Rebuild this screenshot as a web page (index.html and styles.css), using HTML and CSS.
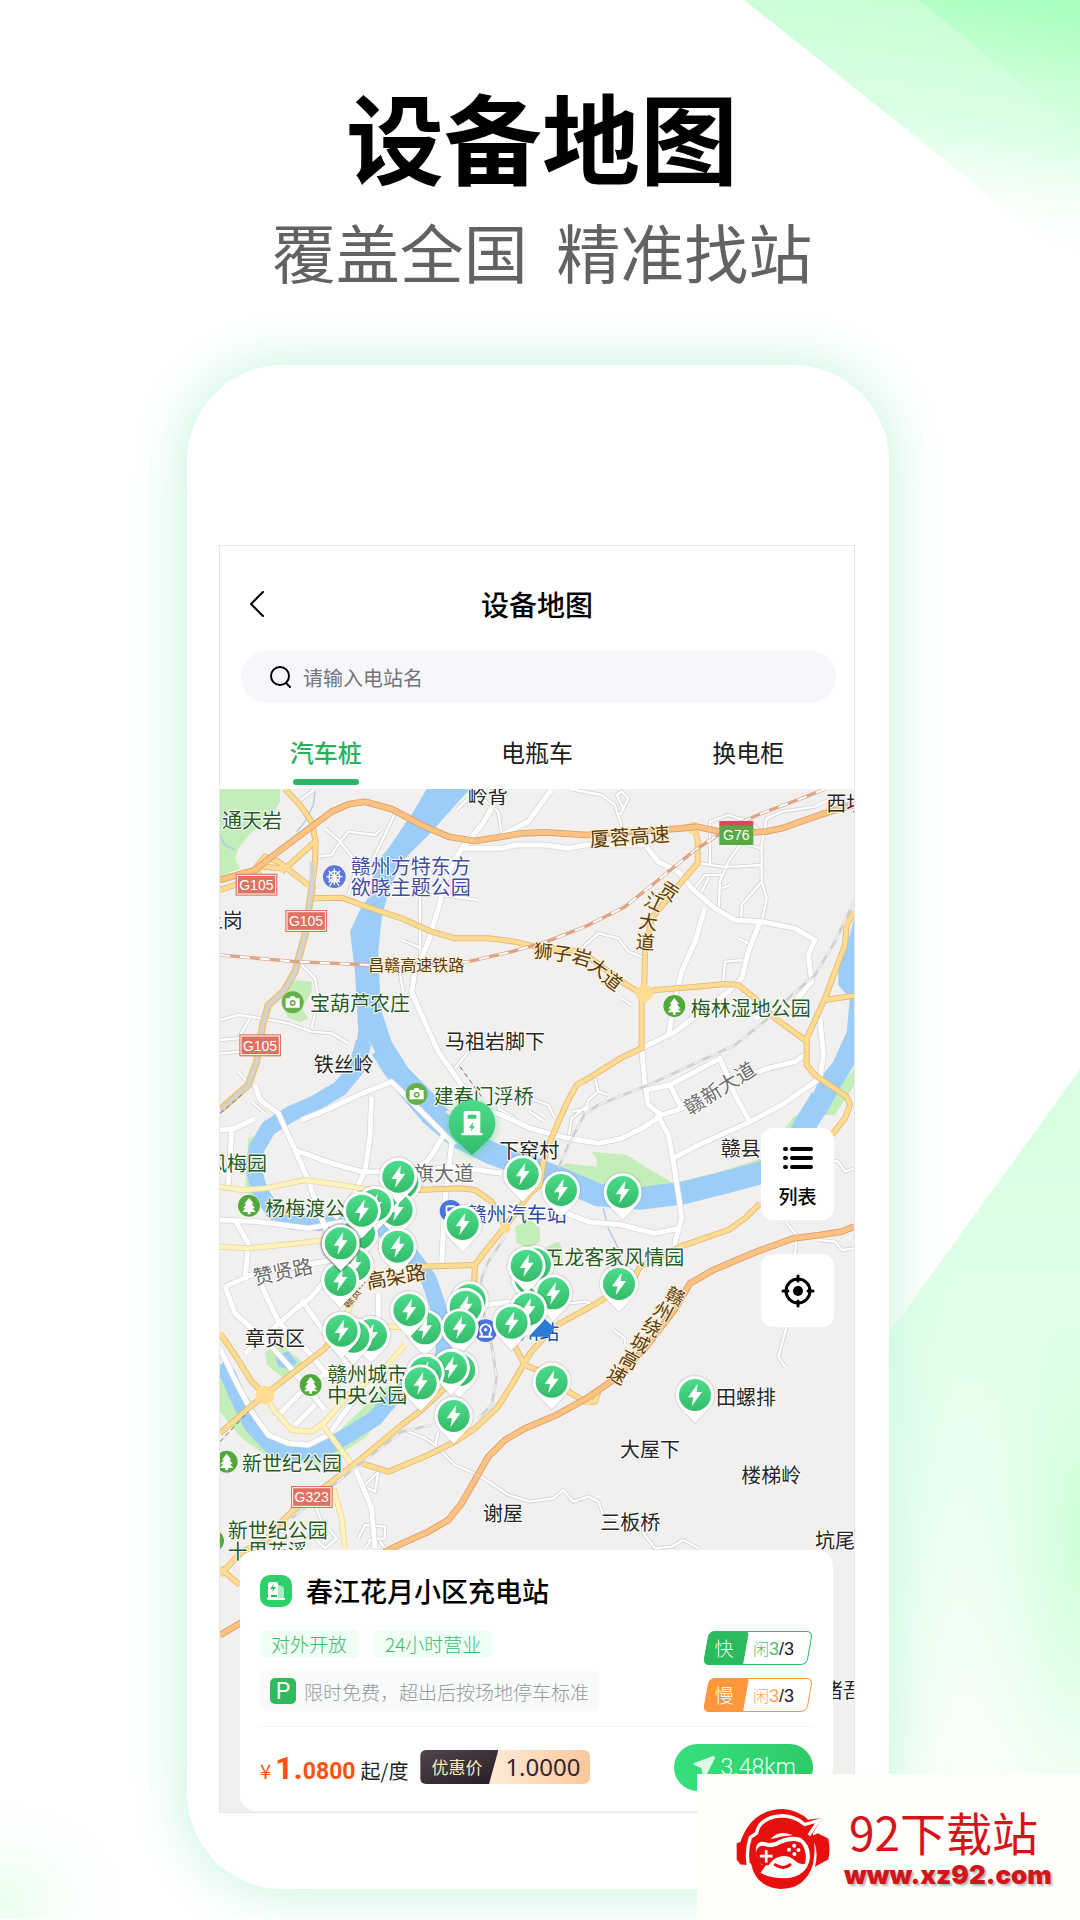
FILE: index.html
```html
<!DOCTYPE html>
<html lang="zh-CN">
<head>
    <meta charset="UTF-8">
    <meta name="viewport" content="width=device-width, initial-scale=1.0">
    <title>设备地图</title>
    <link rel="stylesheet" href="styles.css">
</head>
<body>
    <svg class="backdrop" viewBox="0 0 1080 1920" preserveAspectRatio="none" aria-hidden="true">
        <defs>
            <linearGradient id="rayTop" x1="0.7" y1="0" x2="0.5" y2="1">
                <stop offset="0" stop-color="#c4ffd2"/>
                <stop offset="0.5" stop-color="#dcffe5"/>
                <stop offset="1" stop-color="#ffffff" stop-opacity="0"/>
            </linearGradient>
            <linearGradient id="rayTopDark" x1="0.8" y1="0" x2="0.6" y2="1">
                <stop offset="0" stop-color="#a6ffbc"/>
                <stop offset="1" stop-color="#d6ffe0" stop-opacity="0"/>
            </linearGradient>
            <linearGradient id="raySide" x1="0" y1="0" x2="0" y2="1">
                <stop offset="0" stop-color="#d6ffdf"/>
                <stop offset="0.5" stop-color="#e6ffec"/>
                <stop offset="1" stop-color="#f8fff9"/>
            </linearGradient>
            <radialGradient id="raySideDark" cx="1" cy="0.45" r="0.8">
                <stop offset="0" stop-color="#ccffd6"/>
                <stop offset="1" stop-color="#e6ffec" stop-opacity="0"/>
            </radialGradient>
            <radialGradient id="glowCorner">
                <stop offset="0" stop-color="#e8ffee"/>
                <stop offset="1" stop-color="#ffffff" stop-opacity="0"/>
            </radialGradient>
        </defs>
        <path fill="url(#rayTop)" d="M744 0H1080V250L1040 236Z"/>
        <path fill="url(#rayTopDark)" d="M919 0H1080V150L1040 100Z"/>
        <path fill="url(#raySide)" d="M1080 1070L888 1335V1775H1080Z"/>
        <rect fill="url(#raySideDark)" x="940" y="1330" width="140" height="445"/>
        <ellipse fill="url(#glowCorner)" cx="0" cy="1900" rx="150" ry="120"/>
    </svg>

    <header class="hero">
        <h1>设备地图</h1>
        <p>覆盖全国&nbsp;&nbsp;精准找站</p>
    </header>

    <main class="phone">
        <div class="screen">
            <div class="app-bar">
                <button class="back" type="button" aria-label="返回">
                    <svg viewBox="0 0 18 28"><path d="M15 2L3 14L15 26"/></svg>
                </button>
                <h2>设备地图</h2>
            </div>

            <label class="search">
                <svg viewBox="0 0 24 24"><circle cx="11" cy="11" r="9"/><path d="M17 18L21 22"/></svg>
                <input type="text" placeholder="请输入电站名" aria-label="请输入电站名">
            </label>

            <nav class="tabs">
                <button class="tab active" type="button">汽车桩</button>
                <button class="tab" type="button">电瓶车</button>
                <button class="tab" type="button">换电柜</button>
            </nav>

            <div class="map">
                <svg class="map-canvas" viewBox="15 12 1902 3069" preserveAspectRatio="xMinYMin slice">
                    <defs>
                        <linearGradient id="pinFill" x1="0" y1="0" x2="0" y2="1">
                            <stop offset="0" stop-color="#4bdc8c"/>
                            <stop offset="1" stop-color="#35bb69"/>
                        </linearGradient>
                        <g id="pin">
                            <path class="pin-shadow" d="M-46 40A61 61 0 1 1 46 40L0 88Z"/>
                            <path fill="#fff" d="M-43 38A57 57 0 1 1 43 38L0 83Z"/>
                            <circle r="48" fill="url(#pinFill)"/>
                            <path fill="#fff" d="M8 -34L-21 7H-5L-10 34L21 -9H5Z"/>
                        </g>
                        <g id="tree">
                            <circle r="34" fill="#fff"/>
                            <circle r="33" fill="#52a83b"/>
                            <path fill="#fff" d="M0 -24L14 -6H8L18 8H10L20 19H4V26H-4V19H-20L-10 8H-18L-8 -6H-14Z"/>
                        </g>
                        <g id="camera">
                            <circle r="33" fill="#66b04c"/>
                            <path fill="#fff" d="M-21 -12H-9L-6 -18H6L9 -12H21V16H-21Z"/>
                            <circle cy="2" r="9" fill="#66b04c"/>
                            <circle cy="2" r="4" fill="#fff"/>
                        </g>
                        <g id="whiteRoads">
                            <path d="M990 180L900 180L860 190H740L700 260L670 370L640 470L600 560L590 620L620 690L670 800L740 900L800 960"/>
                            <path d="M990 180L1060 190L1110 180H1290L1330 230L1390 260L1430 310L1500 370L1560 405L1640 410L1740 430L1800 465L1780 510L1790 590L1740 650L1620 700"/>
                            <path d="M740 190L800 120L830 70L855 12M860 150L940 110L990 40L1010 12"/>
                            <path d="M1635 410L1600 500L1580 580L1540 620L1380 740L1280 790L1290 900L1300 960L1340 990"/>
                            <path d="M1470 370L1440 470L1400 560L1385 620L1360 750"/>
                            <path d="M1295 915L1365 900L1515 820L1560 930L1605 1010M1365 900L1400 970M1770 810L1740 830L1660 850L1600 870"/>
                            <path d="M1815 700L1825 810L1815 880L1700 960L1605 1010L1450 1080L1375 1120"/>
                            <path d="M1325 985L1360 1050L1375 1130L1395 1260L1400 1300L1380 1370V1390"/>
                            <path d="M800 970L860 990L945 1030L1060 1060L1150 1075L1220 1060L1290 1025L1340 990L1400 970L1450 940"/>
                            <path d="M1055 1285L1120 1310L1220 1320L1320 1345L1390 1330"/>
                            <path d="M260 1005L345 970L430 930L530 890L620 980L690 1050L720 1080"/>
                            <path d="M120 900L135 945L190 985L240 1095L280 1185L310 1275L350 1375"/>
                            <path d="M240 1095L350 1135L440 1160H590L720 1145L860 1165"/>
                            <path d="M470 935L465 1055L450 1155L420 1225L360 1300"/>
                            <path d="M15 1305L130 1310L280 1330L390 1310M60 1305L100 1375L90 1485M15 1035L60 1030L120 1000M50 1035L40 1200"/>
                            <path d="M30 1505L120 1465L300 1435L400 1415M30 1505L60 1585L170 1685L250 1775L330 1875"/>
                            <path d="M130 1480L190 1610L280 1700L340 1775M90 1705L250 1565L290 1535L380 1425M260 1545L330 1645L400 1745"/>
                            <path d="M490 1525V1625M710 1075L690 1245L680 1435M690 1045L640 1125L590 1160M800 1560L900 1550"/>
                            <path d="M15 1690L60 1785L110 1880L160 1950L220 1975L280 1980L340 1950L420 1840L480 1790L560 1700"/>
                            <path d="M180 1900L280 1800L340 1760M240 1920L300 1860"/>
                            <path d="M420 2050L470 2170L480 2290"/>
                        </g>
                        <g id="lanes">
                            <path d="M330 130L375 170L415 220L420 260L400 330M310 215L350 210L375 170L400 140L480 150L500 130M540 85L500 170L470 230"/>
                            <path d="M680 330L790 345M615 330V520M560 465L620 490M550 540L565 620M250 50L300 12M725 75L760 40M800 40L850 80L860 150"/>
                            <path d="M15 705L70 690L140 700L220 715L290 740L350 745L400 775M260 540L300 580L310 640L290 730M15 765L70 760L105 700M15 805L80 800M110 950L150 985M70 860L105 900"/>
                            <path d="M720 850L760 800L790 790M860 900L850 970L900 1000"/>
                            <path d="M1065 12L1160 30L1200 60L1215 110L1230 150M1215 90L1240 40L1220 20L1205 30L1225 70"/>
                            <path d="M1485 240V110L1540 90L1600 110L1640 140M1455 235L1520 245L1560 245L1640 240V290L1580 360L1578 405M1640 240V180L1655 100L1700 80L1800 65L1850 40L1917 50"/>
                            <path d="M1590 160L1540 230L1515 290L1510 390M1640 290L1655 340L1640 410M1560 170L1640 190M1430 320L1470 270H1520M1455 330L1480 280M1520 310L1545 300"/>
                            <path d="M1100 490L1150 445L1210 460L1240 500L1290 520M1525 590L1530 530L1590 525M1570 460L1600 475M1220 640L1250 660"/>
                            <path d="M1120 960L1070 1000L1060 1060M1140 880L1150 920L1120 945L1110 985M1150 920L1180 930M1070 980L1120 970"/>
                            <path d="M945 940L1000 960L1020 1000M945 980L990 1010"/>
                            <path d="M1715 1315L1745 1350L1740 1410M1805 1365L1860 1370L1880 1395L1917 1390M1840 1125L1870 1130L1890 1160L1917 1150"/>
                            <path d="M1715 1625L1690 1715L1710 1745M1195 1635L1230 1660V1680M1065 1555L1110 1550L1140 1560"/>
                            <path d="M570 1935L630 1960L660 1980L720 2040L790 2070L880 2130L945 2150L1015 2140L1045 2115L1075 2150L1120 2135L1150 2150L1165 2190L1285 2220V2245L1320 2290L1370 2285L1405 2265L1450 2290"/>
                            <path d="M660 1980L670 1940M450 2100L490 2060M460 2110L480 2120L490 2060M300 2160L320 2210L300 2260L330 2290L365 2260L340 2230M430 2260L450 2220L510 2225V2260L460 2265M450 2290L480 2250L510 2290"/>
                        </g>
                        <g id="yellowRoads">
                            <path d="M210 12L255 60L290 110L302 170L300 230L290 310"/>
                            <path d="M120 250L150 215L190 230L280 300M200 260L300 170M15 315L60 300L140 262M140 245L200 250"/>
                            <path d="M290 340L380 338L440 360L560 400L650 440L720 460H820L900 470L960 485L1100 500L1220 590L1285 630L1320 615L1445 605L1530 597L1570 600L1620 640L1680 700L1770 765"/>
                            <path d="M1917 380L1895 420L1890 480L1830 640L1775 760V840L1800 870L1895 935L1905 960L1890 1000L1850 1050M1830 645L1917 632"/>
                            <path d="M1410 130L1435 120L1448 165V235L1400 290L1310 400L1290 500L1288 600L1280 640V790L1225 815L1120 880L1085 900L1060 945L1035 1000L1005 1070L985 1130L975 1200L945 1225L870 1325L810 1400L780 1440L620 1445"/>
                            <path d="M870 1325L830 1250L780 1215L740 1210L600 1215"/>
                            <path d="M780 1435L775 1560L740 1680L700 1800L620 1875L560 1920L440 2020L350 2090L230 2180L190 2220L150 2270L80 2300L15 2370M15 2350L75 2400"/>
                            <path d="M1635 1255L1590 1300L1540 1335L1395 1385L1275 1445L1255 1485L1145 1555L1035 1615L985 1660L945 1705L890 1800L845 1870L780 1930L720 1970L640 2010L520 2060L440 2035"/>
                            <path d="M15 1645L60 1710L110 1790L150 1830L200 1790L330 1690L400 1610M150 1830L100 1870L15 1945"/>
                            <path d="M900 1685L930 1740L990 1765L1060 1820L1110 1850L1140 1850L1150 1820"/>
                        </g>
                        <g id="paleRoads">
                            <path d="M600 1215L500 1220L380 1200L270 1185L150 1210L80 1215L15 1205"/>
                            <path d="M15 1385L100 1390L250 1375L330 1365M380 1625L540 1625L740 1640M420 1525L380 1625"/>
                            <path d="M150 1830L180 1880L230 1935L290 1940L330 1910L400 1830L500 1760L570 1680M320 1915L360 1970L420 2050M355 2110L380 2200L390 2290"/>
                        </g>
                        <g id="highways">
                            <path d="M15 285L120 255L190 200L290 125L350 80L400 58L450 50L530 72L620 120L700 155L780 168L860 155L920 145L990 142L1115 150L1400 130L1445 125L1540 145L1650 140L1700 130L1800 95L1860 75L1917 60"/>
                            <path d="M1917 1325L1880 1340L1815 1350L1735 1360L1625 1400L1495 1455L1425 1495L1385 1565L1290 1690L1195 1785L1115 1840L1025 1890L930 1930L870 1965L820 2015L780 2085L740 2155L700 2205L640 2240L530 2290L400 2360L75 2515L15 2550"/>
                        </g>
                    </defs>

                    <rect class="land" x="15" y="12" width="1902" height="3069"/>

                    <g class="park">
                        <path d="M15 12H195V50L165 100L110 140L70 190L60 220L75 250L15 275Z"/>
                        <path d="M235 585L290 590V620L260 670L280 700L255 712L220 700L205 670L200 640Z"/>
                        <path d="M1130 1100L1235 1110L1315 1160L1375 1195L1305 1207H1205L1095 1185L1035 1145L1055 1135L1145 1145V1120Z"/>
                        <path d="M1375 1195L1500 1165L1640 1120L1740 990L1760 1000L1680 1150L1400 1215ZM1917 850L1875 905L1830 990H1860L1917 900Z"/>
                        <path d="M900 1325L945 1305L975 1330V1370L940 1390L905 1375ZM1005 1380L1030 1370L1040 1385V1430L970 1440L980 1400Z"/>
                        <path d="M150 1700L200 1680L260 1730L250 1765L200 1775L155 1740Z"/>
                        <path d="M15 1780L50 1770L110 1850L150 1940L220 1990L330 1980L400 1910L520 1800L560 1820L450 1960L320 2040L180 2030L80 1960L15 1880Z"/>
                        <path d="M100 1060L130 1050L120 1240L90 1220ZM130 1250L220 1290L180 1320Z"/>
                    </g>
                    <g class="river">
                        <path d="M635 12L595 80L520 190L478 240L465 330L432 380L405 440L420 560L430 740L420 800L465 770L530 900L640 1010L700 975L640 910L580 850L530 770L500 680L495 620L490 500L500 400L520 320L560 230L650 140L730 50L765 12Z"/>
                        <path d="M1765 990L1815 880L1855 830L1895 740L1905 640L1870 600V520L1905 450L1917 400V840L1875 910L1830 990Z"/>
                        <path d="M180 1710L220 1700L245 1730L230 1755L190 1745Z"/>
                        <path class="stream" d="M446 770L425 850L375 910L300 955L230 985L160 1030L125 1090L115 1150L135 1220L175 1280L230 1310L320 1315L420 1300L500 1330L580 1400L640 1480L668 1560L690 1660L680 1740L600 1790L530 1840L480 1900L400 1950L320 1995L230 2005L170 1985L110 1920L70 1840L40 1770L15 1740"/>
                        <path class="stream wide" d="M500 790L530 840L590 920L650 990L720 1050L830 1105L900 1130L945 1145L1045 1185L1150 1230L1280 1240L1400 1225L1520 1195L1650 1160L1720 1115L1770 1020L1820 940"/>
                        <path class="creek" d="M300 20L295 60L270 110L245 140M15 150L30 180L60 195M1165 1270L1180 1330L1210 1390"/>
                    </g>

                    <g class="lane-edge"><use href="#lanes"/></g>
                    <g class="lane-fill"><use href="#lanes"/></g>
                    <g class="white-edge"><use href="#whiteRoads"/></g>
                    <g class="white-fill"><use href="#whiteRoads"/></g>
                    <g class="pale-edge"><use href="#paleRoads"/></g>
                    <g class="pale-fill"><use href="#paleRoads"/></g>
                    <g class="yellow-edge"><use href="#yellowRoads"/></g>
                    <g class="yellow-fill"><use href="#yellowRoads"/></g>
                    <path class="old-road-edge" d="M292 300L270 450L240 560L205 620L160 660L143 720L125 830L100 900L15 975"/>
                    <path class="old-road" d="M292 230L290 310L270 450L240 560L205 620L160 660L143 720L125 830L100 900L15 975"/>
                    <g class="junction"><circle cx="1288" cy="625" r="26"/><circle cx="150" cy="1830" r="28"/><circle cx="1432" cy="130" r="18"/><circle cx="1115" cy="1845" r="16"/><circle cx="870" cy="1330" r="16"/></g>
                    <g class="highway-edge"><use href="#highways"/></g>
                    <g class="highway-fill"><use href="#highways"/></g>

                    <path class="rail" d="M15 510L240 530L470 540L760 530L890 500L995 470L1110 425L1230 365L1330 285L1440 195L1540 130L1640 85L1760 40L1830 12"/>
                    <path class="rail-dash" d="M15 510L240 530L470 540L760 530L890 500L995 470L1110 425L1230 365L1330 285L1440 195L1540 130L1640 85L1760 40L1830 12"/>
                    <g class="grey-rail">
                        <path d="M1917 350L1860 470L1800 570L1730 630L1660 700L1560 780L1450 830L1300 900L1150 960L1110 985L1060 1080L1030 1150"/>
                        <path d="M870 1355L820 1430L800 1480V1560L830 1680L845 1780L830 1860L790 1900M650 1920L560 1940L470 2010L380 2080L230 2200"/>
                    </g>
                    <g class="grey-rail-dash">
                        <path d="M1917 350L1860 470L1800 570L1730 630L1660 700L1560 780L1450 830L1300 900L1150 960L1110 985L1060 1080L1030 1150"/>
                        <path d="M870 1355L820 1430L800 1480V1560L830 1680L845 1780L830 1860L790 1900M650 1920L560 1940L470 2010L380 2080L230 2200"/>
                    </g>
                    <path class="thin-rail" d="M735 845L800 935M15 1970L100 1880M15 985L80 930"/>

                    <!-- road number plates -->
                    <g class="plate">
                        <rect x="62" y="266" width="125" height="66"/><rect class="plate-line" x="67" y="271" width="115" height="56"/><text x="124" y="314">G105</text>
                        <rect x="211" y="375" width="125" height="66"/><rect class="plate-line" x="216" y="380" width="115" height="56"/><text x="273" y="424">G105</text>
                        <rect x="73" y="748" width="125" height="66"/><rect class="plate-line" x="78" y="753" width="115" height="56"/><text x="135" y="798">G105</text>
                        <rect x="228" y="2103" width="125" height="66"/><rect class="plate-line" x="233" y="2108" width="115" height="56"/><text x="290" y="2152">G323</text>
                        <rect class="plate-red" x="1513" y="108" width="102" height="16"/><rect class="plate-green" x="1513" y="122" width="102" height="58"/><text x="1564" y="165">G76</text>
                    </g>

                    <!-- points of interest -->
                    <g transform="translate(358 275)">
                        <circle r="34" fill="#5c78dc"/>
                        <g fill="none" stroke="#fff" stroke-width="4"><circle r="16"/><path d="M0 -24V24M-24 0H24M-17 -17L17 17M-17 17L17 -17M-14 28L0 4L14 28"/></g>
                        <circle r="5" fill="#fff"/>
                    </g>
                    <use href="#camera" x="233" y="652"/>
                    <use href="#camera" x="605" y="927"/>
                    <use href="#tree" x="1378" y="663"/>
                    <use href="#tree" x="102" y="1262"/>
                    <use href="#tree" x="287" y="1800"/>
                    <use href="#tree" x="35" y="2030"/>
                    <use href="#tree" x="-6" y="2267"/>
                    <g transform="translate(707 1278)"><circle r="33" fill="#4a74dd"/><rect x="-15" y="-17" width="30" height="30" rx="5" fill="#fff"/><rect x="-10" y="-11" width="20" height="11" fill="#4a74dd"/></g>
                    <g transform="translate(812 1637)"><circle r="34" fill="#4a74dd"/><path d="M-12 18V8A16 16 0 1 1 12 8V18M-20 18H20" fill="none" stroke="#fff" stroke-width="6"/><circle cy="-3" r="5" fill="#fff"/></g>

                    <g class="place">
                        <text x="758" y="58">岭背</text>
                        <text x="1834" y="78">西坝</text>
                        <text x="-37" y="429">上岗</text>
                        <text x="296" y="862">铁丝岭</text>
                        <text x="690" y="792">马祖岩脚下</text>
                        <text x="853" y="1120">下窑村</text>
                        <text x="1517" y="1114">赣县</text>
                        <text x="90" y="1682">章贡区</text>
                        <text x="1503" y="1860">田螺排</text>
                        <text x="1215" y="2017">大屋下</text>
                        <text x="1579" y="2094">楼梯岭</text>
                        <text x="1156" y="2234">三板桥</text>
                        <text x="804" y="2207">谢屋</text>
                        <text x="1800" y="2290">坑尾</text>
                        <text x="1823" y="2740">渚吾</text>
                    </g>
                    <g class="place scenic">
                        <text x="21" y="130">通天岩</text>
                        <text x="285" y="679">宝葫芦农庄</text>
                        <text x="656" y="957">建春门浮桥</text>
                        <text x="1427" y="693">梅林湿地公园</text>
                        <text x="-24" y="1157">风梅园</text>
                        <text x="151" y="1292">杨梅渡公园</text>
                        <text x="337" y="1790">赣州城市</text>
                        <text x="337" y="1853">中央公园</text>
                        <text x="81" y="2057">新世纪公园</text>
                        <text x="38" y="2259">新世纪公园</text>
                        <text x="38" y="2322">十里花溪</text>
                        <text x="988" y="1440">五龙客家风情园</text>
                    </g>
                    <g class="place theme">
                        <text x="407" y="267">赣州方特东方</text>
                        <text x="407" y="329">欲晓主题公园</text>
                    </g>
                    <g class="place transit">
                        <text x="755" y="1312">赣州汽车站</text>
                        <text x="853" y="1665">赣州站</text>
                    </g>
                    <g class="place street">
                        <text x="537" y="1187">红旗大道</text>
                        <text transform="translate(120 1500) rotate(-12)">赞贤路</text>
                        <text transform="translate(1424 992) rotate(-32)">赣新大道</text>
                    </g>
                    <g class="place road-name">
                        <text class="small" x="460" y="558">昌赣高速铁路</text>
                        <text transform="translate(1126 185) rotate(-4)">厦蓉高速</text>
                        <text transform="translate(458 1512) rotate(-10)">高架路</text>
                        <text class="tiny" transform="translate(398 1572) rotate(-50)">赣贡…</text>
                    </g>
                    <g class="place road-name curved">
                        <text transform="translate(1362 320) rotate(32)" y="20">贡</text>
                        <text transform="translate(1318 352) rotate(26)" y="20">江</text>
                        <text transform="translate(1299 412) rotate(8)" y="20">大</text>
                        <text transform="translate(1291 472) rotate(5)" y="20">道</text>
                        <text transform="translate(985 500) rotate(5)" y="20">狮</text>
                        <text transform="translate(1042 508) rotate(8)" y="20">子</text>
                        <text transform="translate(1101 518) rotate(16)" y="20">岩</text>
                        <text transform="translate(1150 550) rotate(35)" y="20">大</text>
                        <text transform="translate(1192 588) rotate(38)" y="20">道</text>
                        <text transform="translate(1380 1535) rotate(28)" y="20">赣</text>
                        <text transform="translate(1345 1580) rotate(28)" y="20">州</text>
                        <text transform="translate(1310 1627) rotate(28)" y="20">绕</text>
                        <text transform="translate(1275 1675) rotate(28)" y="20">城</text>
                        <text transform="translate(1243 1725) rotate(28)" y="20">高</text>
                        <text transform="translate(1207 1770) rotate(28)" y="20">速</text>
                    </g>

                    <!-- charging stations -->
                    <path fill="#2a7bd6" d="M925 1645L985 1598L1018 1628L1000 1655H950Z"/>
                    <use href="#pin" x="562" y="1192"/>
                    <use href="#pin" x="545" y="1275"/>
                    <use href="#pin" x="550" y="1175"/>
                    <use href="#pin" x="480" y="1260"/>
                    <use href="#pin" x="432" y="1345"/>
                    <use href="#pin" x="441" y="1277"/>
                    <use href="#pin" x="418" y="1440"/>
                    <use href="#pin" x="376" y="1485"/>
                    <g class="visited"><use href="#pin" x="377" y="1375"/></g>
                    <use href="#pin" x="548" y="1385"/>
                    <use href="#pin" x="743" y="1317"/>
                    <use href="#pin" x="923" y="1167"/>
                    <use href="#pin" x="1038" y="1215"/>
                    <use href="#pin" x="1223" y="1221"/>
                    <use href="#pin" x="946" y="1480"/>
                    <use href="#pin" x="960" y="1438"/>
                    <use href="#pin" x="935" y="1442"/>
                    <use href="#pin" x="1015" y="1525"/>
                    <use href="#pin" x="940" y="1573"/>
                    <use href="#pin" x="890" y="1613"/>
                    <use href="#pin" x="630" y="1630"/>
                    <use href="#pin" x="583" y="1575"/>
                    <use href="#pin" x="764" y="1545"/>
                    <use href="#pin" x="752" y="1565"/>
                    <use href="#pin" x="734" y="1627"/>
                    <use href="#pin" x="468" y="1650"/>
                    <use href="#pin" x="415" y="1655"/>
                    <use href="#pin" x="380" y="1637"/>
                    <use href="#pin" x="733" y="1755"/>
                    <use href="#pin" x="708" y="1748"/>
                    <use href="#pin" x="632" y="1763"/>
                    <use href="#pin" x="617" y="1795"/>
                    <use href="#pin" x="716" y="1893"/>
                    <use href="#pin" x="1212" y="1497"/>
                    <use href="#pin" x="1010" y="1790"/>
                    <use href="#pin" x="1440" y="1830"/>
                    <g class="current" transform="translate(771 1018)">
                        <path fill="url(#pinFill)" d="M-48 48A70 70 0 1 1 48 48L0 93Z"/>
                        <path fill="#fff" d="M-25 -34Q-25 -40 -19 -40H19Q25 -40 25 -34V26H32V33H-32V26H-25Z"/>
                        <path fill="#3fc978" d="M-13 -29H13V-17H-13ZM3 -6L-9 10H-2L-4 22L9 6H2Z"/>
                    </g>
                </svg>

                <div class="map-tools">
                    <button class="tool" type="button">
                        <svg viewBox="0 0 30 24"><path d="M9 3H28M9 12H28M9 21H28M2 3H3M2 12H3M2 21H3"/></svg>
                        <span>列表</span>
                    </button>
                    <button class="tool locate" type="button" aria-label="定位">
                        <svg viewBox="0 0 34 34"><circle cx="17" cy="17" r="12"/><circle class="dot" cx="17" cy="17" r="5"/><path d="M17 2V7M17 27V32M2 17H7M27 17H32"/></svg>
                    </button>
                </div>

                <section class="card">
                    <div class="card-head">
                        <svg class="station-icon" viewBox="0 0 32 32">
                            <rect width="32" height="32" rx="10" fill="#2fd069"/>
                            <path fill="#a9efc4" d="M18 10L22 11Q24 12 24 14V24H18Z"/>
                            <path fill="#fff" d="M8 9Q8 7 10 7H16Q18 7 18 9V23H25V25H7V23H8Z"/>
                            <path fill="#28b95b" d="M14 9L10 14H13L12 17L16 12H13ZM11 20H17V22H11Z"/>
                        </svg>
                        <h3>春江花月小区充电站</h3>
                    </div>
                    <div class="card-body">
                        <div class="info">
                            <div class="tags"><span>对外开放</span><span>24小时营业</span></div>
                            <div class="parking"><b>P</b>限时免费，超出后按场地停车标准</div>
                        </div>
                        <div class="chips">
                            <div class="chip fast"><b>快</b><span><em>闲</em><i>3</i>/3</span></div>
                            <div class="chip slow"><b>慢</b><span><em>闲</em><i>3</i>/3</span></div>
                        </div>
                    </div>
                    <div class="card-foot">
                        <div class="price"><small>¥</small><strong>1.</strong><b>0800</b><span>起/度</span></div>
                        <div class="deal"><b>优惠价</b><span>1.0000</span></div>
                        <button class="distance" type="button">
                            <svg viewBox="0 0 22 22"><path d="M1 7Q0 8 1 9L8 12L10 20Q11 22 13 20L22 2Q22 0 20 0Z"/></svg>
                            3.48km
                        </button>
                    </div>
                </section>
            </div>
        </div>
    </main>

    <a class="site-mark" href="#">
        <svg viewBox="33 40 280 238">
            <path fill="#e8100f" d="M46 138Q80 40 175 40Q220 44 248 72L290 67L262 112Q272 160 262 205Q240 278 165 278Q92 274 77 200L70 207L46 205L35 190V142Z"/>
            <path fill="#e8100f" d="M258 122L276 112L308 128Q315 160 308 190L268 212Q282 165 258 122Z"/>
            <path fill="none" stroke="#fefffa" stroke-width="10" d="M70 208Q62 162 76 124L94 112Q104 64 170 60Q212 62 238 86L280 74L250 118"/>
            <path fill="#fefffa" d="M136 130Q160 100 202 118Q170 120 136 130Z"/>
            <path fill="#fefffa" d="M92 160Q94 134 118 138Q142 146 160 133Q196 116 226 126Q256 146 253 188Q244 240 184 246Q132 246 106 230L130 196L110 206Q92 192 92 160Z"/>
            <path fill="#e8100f" d="M92 172Q96 146 118 150Q145 160 165 144Q205 128 228 142Q246 170 239 202Q226 208 208 193Q190 177 165 181Q142 186 132 206Q112 212 98 195Z"/>
            <path fill="none" stroke="#fefffa" stroke-width="8" d="M104 180H142M123 162V199"/>
            <g fill="#fefffa"><circle cx="206" cy="149" r="6"/><circle cx="191" cy="161" r="6"/><circle cx="219" cy="162" r="6"/><circle cx="207" cy="174" r="6"/></g>
            <path fill="none" stroke="#e8100f" stroke-width="9" stroke-linecap="round" d="M150 206Q174 222 194 206"/>
        </svg>
        <span class="site-name">
            <b>92下载站</b>
            <span>www.xz92.com</span>
        </span>
    </a>
</body>
</html>
```

FILE: styles.css
```css
* {
    box-sizing: border-box;
}
body {
    margin: 0;
    padding: 84px 0 30px;
    position: relative;
    overflow-x: hidden;
    background-color: #fff;
    color: #000;
    font-family: "Noto Sans CJK SC", sans-serif;
    display: flex;
    flex-direction: column;
    align-items: center;
}
h1, h2, h3, p {
    margin: 0;
}
button {
    border: none;
    padding: 0;
    background: none;
    color: inherit;
    font-family: inherit;
    cursor: pointer;
}
.backdrop {
    position: absolute;
    top: 0;
    left: 0;
    width: 100%;
    height: 100%;
    z-index: -1;
}
.hero {
    text-align: center;
    padding-left: 4px;
    margin-bottom: 83px;
}
.hero h1 {
    font-size: 98px;
    line-height: 100px;
    font-weight: 700;
}
.hero p {
    margin-top: 34px;
    font-size: 64px;
    line-height: 64px;
    color: #626262;
}

/* Phone */
.phone {
    width: 65%;
    margin-right: 4px;
    padding: 180px 34px 76px 32px;
    background-color: #fff;
    border-radius: 96px;
    box-shadow: 0 0 56px 4px #c8f5e0;
}
.screen {
    border: 1px solid #e6e6e6;
}
.app-bar {
    position: relative;
    padding: 43px 28px 32px;
    text-align: center;
}
.app-bar h2 {
    font-size: 28px;
    line-height: 30px;
    font-weight: 500;
}
.back {
    position: absolute;
    left: 28px;
    top: 44px;
    width: 18px;
    height: 28px;
}
.back svg {
    display: block;
    fill: none;
    stroke: #000;
    stroke-width: 2;
    stroke-linecap: round;
    stroke-linejoin: round;
}
.search {
    display: flex;
    align-items: center;
    gap: 10px;
    height: 52px;
    margin: 0 18px 0 21px;
    padding: 0 28px;
    border-radius: 26px;
    background-color: #f5f7fb;
}
.search svg {
    width: 24px;
    height: 24px;
    fill: none;
    stroke: #000;
    stroke-width: 2;
    stroke-linecap: round;
}
.search input {
    flex: 1;
    min-width: 0;
    border: none;
    outline: none;
    padding: 0;
    background: none;
    font-family: inherit;
    font-size: 20px;
}
.search input::placeholder {
    color: #757575;
}
.tabs {
    display: grid;
    grid-template-columns: repeat(3, 1fr);
}
.tab {
    position: relative;
    height: 86px;
    padding-bottom: 14px;
    padding-top: 26px;
    font-size: 24px;
    line-height: 28px;
    color: #1c1c1c;
}
.tab.active {
    color: #24b35c;
    font-weight: 500;
}
.tab.active::after {
    content: "";
    position: absolute;
    left: 50%;
    bottom: 4px;
    width: 66px;
    height: 6px;
    margin-left: -33px;
    border-radius: 3px;
    background-color: #2db563;
}

/* Map */
.map {
    position: relative;
    aspect-ratio: 634 / 1023;
    overflow: hidden;
}
.map-canvas {
    display: block;
    width: 100%;
    height: 100%;
}
.map-canvas path {
    stroke-linejoin: round;
}
.land {
    fill: #f1f0ee;
}
.park {
    fill: #c3edb9;
}
.river {
    fill: #9ccdf8;
}
.stream {
    fill: none;
    stroke: #9ccdf8;
    stroke-width: 48;
}
.stream.wide {
    stroke-width: 68;
}
.creek {
    fill: none;
    stroke: #a9c8f0;
    stroke-width: 4;
}
.lane-edge, .lane-fill, .white-edge, .white-fill, .pale-edge, .pale-fill,
.yellow-edge, .yellow-fill, .highway-edge, .highway-fill, .old-road,
.old-road-edge, .rail, .rail-dash, .grey-rail, .grey-rail-dash, .thin-rail {
    fill: none;
}
.lane-edge {
    stroke: #d3d3d6;
    stroke-width: 12;
}
.lane-fill {
    stroke: #fff;
    stroke-width: 7;
}
.white-edge {
    stroke: #d3d3da;
    stroke-width: 19;
}
.white-fill {
    stroke: #fff;
    stroke-width: 15;
}
.pale-edge {
    stroke: #e9d7a0;
    stroke-width: 18;
}
.pale-fill {
    stroke: #fff2bd;
    stroke-width: 13;
}
.yellow-edge {
    stroke: #e3b673;
    stroke-width: 18;
}
.yellow-fill {
    stroke: #ffdc92;
    stroke-width: 13;
}
.junction {
    fill: #ffdc92;
}
.old-road-edge {
    stroke: #f0c260;
    stroke-width: 22;
}
.old-road {
    stroke: #d2d2d2;
    stroke-width: 14;
}
.highway-edge {
    stroke: #dd9c62;
    stroke-width: 20;
}
.highway-fill {
    stroke: #fcc283;
    stroke-width: 15;
}
.rail {
    stroke: #dda486;
    stroke-width: 10;
}
.rail-dash {
    stroke: #fff;
    stroke-width: 6;
    stroke-dasharray: 30 30;
}
.grey-rail {
    stroke: #cfcfcf;
    stroke-width: 8;
}
.grey-rail-dash {
    stroke: #f6f6f6;
    stroke-width: 4;
    stroke-dasharray: 26 26;
}
.thin-rail {
    stroke: #6a6a6a;
    stroke-width: 3;
    stroke-dasharray: 14 10;
}
.plate rect {
    fill: #e0705f;
}
.plate rect.plate-red {
    fill: #d64b57;
}
.plate rect.plate-line {
    fill: none;
    stroke: #fff;
    stroke-width: 3;
}
.plate rect.plate-green {
    fill: #57ab46;
}
.plate text {
    fill: #fff;
    font-family: "Liberation Sans", sans-serif;
    font-size: 42px;
    text-anchor: middle;
}
.place {
    fill: #262626;
    stroke: #fff;
    stroke-width: 6;
    stroke-linejoin: round;
    paint-order: stroke;
    font-size: 60px;
}
.place.scenic {
    fill: #275a1e;
}
.place.theme {
    fill: #404e9e;
}
.place.transit {
    fill: #2c4caa;
}
.place.street {
    fill: #6b6b6b;
}
.place.road-name {
    fill: #5b3a0c;
    stroke: #fff3d6;
}
.place.curved {
    font-size: 57px;
    text-anchor: middle;
}
.place .small {
    font-size: 48px;
}
.place .tiny {
    font-size: 33px;
}
.pin-shadow {
    fill: #000;
    fill-opacity: 0.08;
}
.visited {
    filter: drop-shadow(0 1px 3px #444);
}
.current {
    filter: drop-shadow(0 6px 12px rgba(63, 201, 120, 0.5));
}
.map-tools {
    position: absolute;
    top: 339px;
    right: 20px;
    display: flex;
    flex-direction: column;
    gap: 34px;
}
.tool {
    display: flex;
    flex-direction: column;
    align-items: center;
    gap: 12px;
    width: 73px;
    height: 92px;
    padding-top: 18px;
    border-radius: 12px;
    background-color: #fff;
    font-size: 19px;
    line-height: 28px;
    font-weight: 500;
}
.tool svg {
    width: 30px;
    height: 24px;
    fill: none;
    stroke: #000;
    stroke-width: 4;
    stroke-linecap: round;
}
.tool.locate {
    height: 73px;
    padding: 0;
    justify-content: center;
}
.tool.locate svg {
    width: 34px;
    height: 34px;
    stroke-width: 3;
}
.tool .dot {
    fill: #000;
    stroke: none;
}

/* Station card */
.card {
    position: absolute;
    left: 20px;
    right: 21px;
    bottom: 1px;
    height: 261px;
    padding: 24px 20px 0;
    border-radius: 16px;
    background-color: #fff;
}
.card-head {
    display: flex;
    align-items: center;
    gap: 14px;
    height: 34px;
}
.station-icon {
    width: 32px;
    height: 32px;
}
.card-head h3 {
    font-size: 27px;
    line-height: 34px;
    font-weight: 500;
}
.card-body {
    display: flex;
    justify-content: space-between;
    margin-top: 22px;
    padding-bottom: 14px;
    border-bottom: 1px solid #f4f4f4;
}
.info {
    display: flex;
    flex-direction: column;
    align-items: flex-start;
    gap: 13px;
}
.tags {
    display: flex;
    gap: 16px;
}
.tags span {
    padding: 0 11px;
    border-radius: 4px;
    background-color: #f0fff6;
    color: #3fb870;
    font-size: 19px;
    line-height: 28px;
    font-weight: 300;
}
.parking {
    display: flex;
    align-items: center;
    gap: 8px;
    height: 40px;
    padding: 0 10px;
    border-radius: 6px;
    background-color: #f9fafa;
    color: #94999f;
    font-size: 19px;
    font-weight: 300;
    white-space: nowrap;
}
.parking b {
    width: 26px;
    height: 26px;
    border-radius: 5px;
    background-color: #2dbb5d;
    color: #fff;
    font-family: Roboto, sans-serif;
    font-size: 23px;
    line-height: 28px;
    font-weight: 400;
    text-align: center;
}
.chips {
    display: flex;
    flex-direction: column;
    gap: 13px;
    padding: 1px 1px 0 0;
}
.chip {
    position: relative;
    display: flex;
    align-items: center;
    width: 108px;
    height: 34px;
    color: #2cba5e;
    z-index: 0;
}
.chip.slow {
    color: #ff983c;
}
.chip::before {
    content: "";
    position: absolute;
    inset: 0 2px;
    border: 1px solid currentColor;
    border-radius: 6px;
    transform: skewX(-10deg);
    z-index: -1;
}
.chip b {
    position: relative;
    width: 44px;
    line-height: 34px;
    padding-right: 4px;
    font-size: 19px;
    font-weight: 300;
    text-align: center;
}
.chip b::first-line {
    color: #fff;
}
.chip b::before {
    content: "";
    position: absolute;
    inset: 0 2px;
    border-radius: 6px 4px 0 6px;
    background-color: currentColor;
    transform: skewX(-10deg);
    z-index: -1;
}
.chip span {
    padding-left: 5px;
    font-family: "Liberation Sans", "Noto Sans CJK SC", sans-serif;
    font-size: 18px;
    line-height: 34px;
    color: #222;
}
.chip em,
.chip i {
    font-style: normal;
    color: #4fbf7d;
}
.chip em {
    font-family: "Noto Sans CJK SC", sans-serif;
    font-size: 16px;
    font-weight: 300;
}
.chip.slow em,
.chip.slow i {
    color: #ffa65a;
}
.card-foot {
    display: flex;
    align-items: center;
    height: 52px;
    margin-top: 16px;
    padding-bottom: 4px;
}
.price {
    display: flex;
    align-items: baseline;
    color: #ff5210;
    font-family: Roboto, sans-serif;
    line-height: 34px;
    padding-top: 6px;
}
.price small {
    font-family: "Noto Sans CJK SC", sans-serif;
    font-size: 20px;
    padding-right: 4px;
}
.price strong {
    font-size: 32px;
}
.price b {
    font-size: 23px;
}
.price span {
    padding-left: 5px;
    color: #222;
    font-family: "Noto Sans CJK SC", sans-serif;
    font-size: 20px;
}
.deal {
    display: flex;
    height: 34px;
    margin-left: 12px;
    border-radius: 6px;
    overflow: hidden;
    background: linear-gradient(90deg, #ffe9d3 45%, #fdc79b);
    line-height: 34px;
}
.deal b {
    width: 78px;
    padding-left: 11px;
    background: linear-gradient(160deg, #51464d, #261c23);
    clip-path: polygon(0 0, 100% 0, 88% 100%, 0 100%);
    color: #f5e8bc;
    font-size: 17px;
    font-weight: 400;
}
.deal span {
    padding: 0 10px 0 7px;
    color: #33262c;
    font-family: "Noto Sans", sans-serif;
    font-size: 24px;
}
.distance {
    display: flex;
    align-items: center;
    gap: 6px;
    height: 47px;
    margin-left: auto;
    padding: 0 17px 0 19px;
    border-radius: 24px;
    background: linear-gradient(90deg, #36e07c, #2ecb67);
    color: #f2fff6;
    font-family: Roboto, sans-serif;
    font-size: 23px;
    font-weight: 300;
}
.distance svg {
    width: 22px;
    height: 22px;
    fill: #dcfce8;
}

/* Site mark */
.site-mark {
    position: absolute;
    right: 0;
    bottom: 0;
    display: flex;
    align-items: center;
    gap: 14px;
    width: 383px;
    height: 145px;
    padding: 4px 0 0 39px;
    background-color: #fefffa;
    text-decoration: none;
    color: #d4141b;
}
.site-mark svg {
    flex-shrink: 0;
    width: 94px;
    height: 80px;
}
.site-name {
    display: flex;
    flex-direction: column;
}
.site-name b {
    padding-left: 5px;
    font-size: 46px;
    line-height: 52px;
    font-weight: 400;
}
.site-name span {
    font-family: Inter, sans-serif;
    font-size: 26px;
    line-height: 36px;
    font-weight: 900;
    text-shadow: 2px 2px 2px #b9b9b9;
}
```
